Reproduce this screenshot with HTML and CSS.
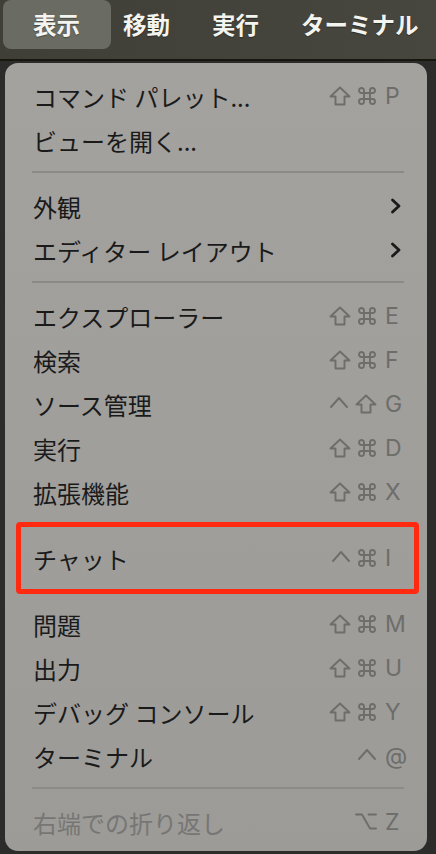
FILE: index.html
```html
<!DOCTYPE html>
<html lang="ja">
<head>
    <meta charset="UTF-8">
    <meta name="viewport" content="width=device-width, initial-scale=1.0">
    <title>表示メニュー</title>
    <link rel="stylesheet" href="styles.css">
</head>
<body>
    <div class="menubar">
        <div class="bar-item active">表示</div>
        <div class="bar-item">移動</div>
        <div class="bar-item">実行</div>
        <div class="bar-item">ターミナル</div>
    </div>

    <div class="menu">
        <div class="row">
            <span class="label">コマンド パレット...</span>
            <span class="keys">
                <span class="mods">
                    <svg class="ico" viewBox="0 0 22 20" width="22" height="20"><path d="M11 1.5 L20.5 10.5 H15.5 V18.5 H6.5 V10.5 H1.5 Z"/></svg>
                    <svg class="ico" viewBox="0 0 20 20" width="20" height="20"><path d="M7 4.5 V15.5 M13 4.5 V15.5 M4.5 7 H15.5 M4.5 13 H15.5 M7 4.5 A2.5 2.5 0 1 0 4.5 7 M13 4.5 A2.5 2.5 0 1 1 15.5 7 M7 15.5 A2.5 2.5 0 1 1 4.5 13 M13 15.5 A2.5 2.5 0 1 0 15.5 13"/></svg>
                </span>
                <span class="key">P</span>
            </span>
        </div>
        <div class="row">
            <span class="label">ビューを開く...</span>
        </div>
        <div class="sep"></div>
        <div class="row">
            <span class="label">外観</span>
            <svg class="chev" viewBox="0 0 12 16" width="12" height="16"><path d="M2.5 2 L9 8 L2.5 14"/></svg>
        </div>
        <div class="row">
            <span class="label">エディター レイアウト</span>
            <svg class="chev" viewBox="0 0 12 16" width="12" height="16"><path d="M2.5 2 L9 8 L2.5 14"/></svg>
        </div>
        <div class="sep"></div>
        <div class="row">
            <span class="label">エクスプローラー</span>
            <span class="keys">
                <span class="mods">
                    <svg class="ico" viewBox="0 0 22 20" width="22" height="20"><path d="M11 1.5 L20.5 10.5 H15.5 V18.5 H6.5 V10.5 H1.5 Z"/></svg>
                    <svg class="ico" viewBox="0 0 20 20" width="20" height="20"><path d="M7 4.5 V15.5 M13 4.5 V15.5 M4.5 7 H15.5 M4.5 13 H15.5 M7 4.5 A2.5 2.5 0 1 0 4.5 7 M13 4.5 A2.5 2.5 0 1 1 15.5 7 M7 15.5 A2.5 2.5 0 1 1 4.5 13 M13 15.5 A2.5 2.5 0 1 0 15.5 13"/></svg>
                </span>
                <span class="key">E</span>
            </span>
        </div>
        <div class="row">
            <span class="label">検索</span>
            <span class="keys">
                <span class="mods">
                    <svg class="ico" viewBox="0 0 22 20" width="22" height="20"><path d="M11 1.5 L20.5 10.5 H15.5 V18.5 H6.5 V10.5 H1.5 Z"/></svg>
                    <svg class="ico" viewBox="0 0 20 20" width="20" height="20"><path d="M7 4.5 V15.5 M13 4.5 V15.5 M4.5 7 H15.5 M4.5 13 H15.5 M7 4.5 A2.5 2.5 0 1 0 4.5 7 M13 4.5 A2.5 2.5 0 1 1 15.5 7 M7 15.5 A2.5 2.5 0 1 1 4.5 13 M13 15.5 A2.5 2.5 0 1 0 15.5 13"/></svg>
                </span>
                <span class="key">F</span>
            </span>
        </div>
        <div class="row">
            <span class="label">ソース管理</span>
            <span class="keys">
                <span class="mods">
                    <svg class="ico" viewBox="0 0 20 20" width="20" height="20"><path d="M2 13 L10 4 L18 13"/></svg>
                    <svg class="ico" viewBox="0 0 22 20" width="22" height="20"><path d="M11 1.5 L20.5 10.5 H15.5 V18.5 H6.5 V10.5 H1.5 Z"/></svg>
                </span>
                <span class="key">G</span>
            </span>
        </div>
        <div class="row">
            <span class="label">実行</span>
            <span class="keys">
                <span class="mods">
                    <svg class="ico" viewBox="0 0 22 20" width="22" height="20"><path d="M11 1.5 L20.5 10.5 H15.5 V18.5 H6.5 V10.5 H1.5 Z"/></svg>
                    <svg class="ico" viewBox="0 0 20 20" width="20" height="20"><path d="M7 4.5 V15.5 M13 4.5 V15.5 M4.5 7 H15.5 M4.5 13 H15.5 M7 4.5 A2.5 2.5 0 1 0 4.5 7 M13 4.5 A2.5 2.5 0 1 1 15.5 7 M7 15.5 A2.5 2.5 0 1 1 4.5 13 M13 15.5 A2.5 2.5 0 1 0 15.5 13"/></svg>
                </span>
                <span class="key">D</span>
            </span>
        </div>
        <div class="row">
            <span class="label">拡張機能</span>
            <span class="keys">
                <span class="mods">
                    <svg class="ico" viewBox="0 0 22 20" width="22" height="20"><path d="M11 1.5 L20.5 10.5 H15.5 V18.5 H6.5 V10.5 H1.5 Z"/></svg>
                    <svg class="ico" viewBox="0 0 20 20" width="20" height="20"><path d="M7 4.5 V15.5 M13 4.5 V15.5 M4.5 7 H15.5 M4.5 13 H15.5 M7 4.5 A2.5 2.5 0 1 0 4.5 7 M13 4.5 A2.5 2.5 0 1 1 15.5 7 M7 15.5 A2.5 2.5 0 1 1 4.5 13 M13 15.5 A2.5 2.5 0 1 0 15.5 13"/></svg>
                </span>
                <span class="key">X</span>
            </span>
        </div>
        <div class="sep"></div>
        <div class="row marked">
            <span class="label">チャット</span>
            <span class="keys">
                <span class="mods">
                    <svg class="ico" viewBox="0 0 20 20" width="20" height="20"><path d="M2 13 L10 4 L18 13"/></svg>
                    <svg class="ico" viewBox="0 0 20 20" width="20" height="20"><path d="M7 4.5 V15.5 M13 4.5 V15.5 M4.5 7 H15.5 M4.5 13 H15.5 M7 4.5 A2.5 2.5 0 1 0 4.5 7 M13 4.5 A2.5 2.5 0 1 1 15.5 7 M7 15.5 A2.5 2.5 0 1 1 4.5 13 M13 15.5 A2.5 2.5 0 1 0 15.5 13"/></svg>
                </span>
                <span class="key">I</span>
            </span>
        </div>
        <div class="sep"></div>
        <div class="row">
            <span class="label">問題</span>
            <span class="keys">
                <span class="mods">
                    <svg class="ico" viewBox="0 0 22 20" width="22" height="20"><path d="M11 1.5 L20.5 10.5 H15.5 V18.5 H6.5 V10.5 H1.5 Z"/></svg>
                    <svg class="ico" viewBox="0 0 20 20" width="20" height="20"><path d="M7 4.5 V15.5 M13 4.5 V15.5 M4.5 7 H15.5 M4.5 13 H15.5 M7 4.5 A2.5 2.5 0 1 0 4.5 7 M13 4.5 A2.5 2.5 0 1 1 15.5 7 M7 15.5 A2.5 2.5 0 1 1 4.5 13 M13 15.5 A2.5 2.5 0 1 0 15.5 13"/></svg>
                </span>
                <span class="key">M</span>
            </span>
        </div>
        <div class="row">
            <span class="label">出力</span>
            <span class="keys">
                <span class="mods">
                    <svg class="ico" viewBox="0 0 22 20" width="22" height="20"><path d="M11 1.5 L20.5 10.5 H15.5 V18.5 H6.5 V10.5 H1.5 Z"/></svg>
                    <svg class="ico" viewBox="0 0 20 20" width="20" height="20"><path d="M7 4.5 V15.5 M13 4.5 V15.5 M4.5 7 H15.5 M4.5 13 H15.5 M7 4.5 A2.5 2.5 0 1 0 4.5 7 M13 4.5 A2.5 2.5 0 1 1 15.5 7 M7 15.5 A2.5 2.5 0 1 1 4.5 13 M13 15.5 A2.5 2.5 0 1 0 15.5 13"/></svg>
                </span>
                <span class="key">U</span>
            </span>
        </div>
        <div class="row">
            <span class="label">デバッグ コンソール</span>
            <span class="keys">
                <span class="mods">
                    <svg class="ico" viewBox="0 0 22 20" width="22" height="20"><path d="M11 1.5 L20.5 10.5 H15.5 V18.5 H6.5 V10.5 H1.5 Z"/></svg>
                    <svg class="ico" viewBox="0 0 20 20" width="20" height="20"><path d="M7 4.5 V15.5 M13 4.5 V15.5 M4.5 7 H15.5 M4.5 13 H15.5 M7 4.5 A2.5 2.5 0 1 0 4.5 7 M13 4.5 A2.5 2.5 0 1 1 15.5 7 M7 15.5 A2.5 2.5 0 1 1 4.5 13 M13 15.5 A2.5 2.5 0 1 0 15.5 13"/></svg>
                </span>
                <span class="key">Y</span>
            </span>
        </div>
        <div class="row">
            <span class="label">ターミナル</span>
            <span class="keys">
                <span class="mods">
                    <svg class="ico" viewBox="0 0 20 20" width="20" height="20"><path d="M2 13 L10 4 L18 13"/></svg>
                </span>
                <span class="key">@</span>
            </span>
        </div>
        <div class="sep"></div>
        <div class="row disabled">
            <span class="label">右端での折り返し</span>
            <span class="keys">
                <span class="mods">
                    <svg class="ico" viewBox="0 0 22 20" width="22" height="20"><path d="M1 2.5 H7 L15 16.5 H21 M13.5 2.5 H21"/></svg>
                </span>
                <span class="key">Z</span>
            </span>
        </div>
    </div>
</body>
</html>
```

FILE: styles.css
```css
body {
    margin: 0;
    width: 436px;
    height: 854px;
    overflow: hidden;
    background-color: #2c2c2b;
    font-family: "Noto Sans CJK JP", "Noto Sans", sans-serif;
}
.menubar {
    display: flex;
    height: 61px;
    padding-left: 3px;
    overflow: hidden;
    background: linear-gradient(90deg, #3f3f38, #47473f);
    border-bottom: 2px solid #17170f;
    box-sizing: border-box;
}
.bar-item {
    flex-shrink: 0;
    height: 49px;
    line-height: 49px;
    padding: 0 21px;
    font-size: 23.5px;
    font-weight: 700;
    color: #f3f3ef;
    white-space: nowrap;
    text-shadow: 0 1px 1px rgba(0,0,0,0.35);
}
.bar-item.active {
    padding: 0 31px 0 30px;
    margin-right: -9px;
    background-color: #6a6b63;
    border-radius: 8px;
}
.menu {
    margin: 2px 9px 0 5px;
    height: 788px;
    padding-top: 11px;
    box-sizing: border-box;
    background: linear-gradient(180deg, #a3a29f, #9c9b98);
    border-radius: 13px;
}
.row {
    position: relative;
    display: flex;
    align-items: center;
    justify-content: space-between;
    height: 44px;
    padding: 0 20px 0 28px;
}
.label {
    font-size: 24px;
    color: #1a1a1a;
    white-space: nowrap;
}
.keys {
    display: flex;
    align-items: center;
}
.mods {
    display: flex;
    align-items: center;
    gap: 6px;
}
.ico {
    fill: none;
    stroke: #6d6d6a;
    stroke-width: 1.9;
    stroke-linejoin: round;
    stroke-linecap: round;
}
.key {
    width: 22px;
    margin-left: 8px;
    font-family: Inter, "Liberation Sans", sans-serif;
    font-size: 23px;
    color: #6d6d6a;
    line-height: 1;
}
.chev {
    margin-right: 5px;
    fill: none;
    stroke: #1a1a1a;
    stroke-width: 2.8;
    stroke-linecap: round;
    stroke-linejoin: round;
}
.sep {
    height: 22px;
    display: flex;
    align-items: center;
    padding: 0 23px 0 27px;
}
.sep::before {
    content: "";
    flex: 1;
    height: 2px;
    margin-top: -2px;
    background-color: #8b8a87;
}
.disabled .label {
    color: #777674;
}
.marked::after {
    content: "";
    position: absolute;
    top: -14px;
    bottom: -14px;
    left: 11px;
    right: 8px;
    border: 5px solid #ff2a10;
    border-radius: 4px;
}
```
